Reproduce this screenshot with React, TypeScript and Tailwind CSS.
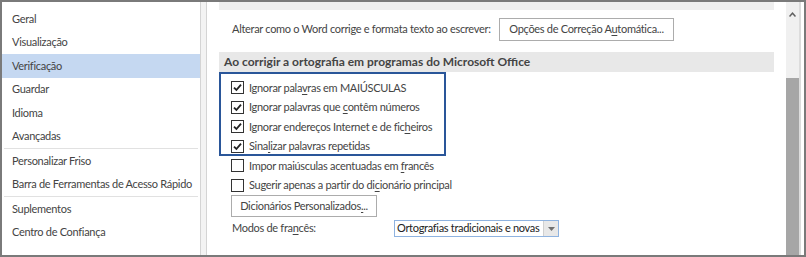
import { ReactNode } from "react";

const FONT = { fontFamily: 'Lato, "Noto Sans", sans-serif' };

const navGroups: string[][] = [
  ["Geral", "Visualização", "Verificação", "Guardar", "Idioma", "Avançadas"],
  ["Personalizar Friso", "Barra de Ferramentas de Acesso Rápido"],
  ["Suplementos", "Centro de Confiança"],
];

function U({ children }: { children: ReactNode }) {
  return <span className="underline underline-offset-2">{children}</span>;
}

function CheckBox({ checked }: { checked: boolean }) {
  return (
    <span className="flex h-[13px] w-[13px] shrink-0 items-center justify-center border border-[#333] bg-white">
      {checked && (
        <svg width="9" height="9" viewBox="0 0 9 9">
          <path d="M1 4.6 L3.4 7 L8 1.6" fill="none" stroke="#222" strokeWidth="1.8" />
        </svg>
      )}
    </span>
  );
}

function CheckRow({ checked, children }: { checked: boolean; children: ReactNode }) {
  return (
    <div className="flex h-[19.5px] items-center gap-[5px] pl-[12px]">
      <CheckBox checked={checked} />
      <span>{children}</span>
    </div>
  );
}

export default function App() {
  return (
    <div
      className="flex h-[257px] w-[806px] border-2 border-[#7a7a7a] bg-white text-[11px] tracking-[-0.3px] text-[#444] whitespace-nowrap"
      style={FONT}
    >
      {/* navegação */}
      <nav className="w-[199px] shrink-0 border-r border-[#d4d4d4] pt-[5px]">
        {navGroups.map((group, gi) => (
          <div key={gi} className={gi > 0 ? "mx-[2px] border-t border-[#e1e1e1]" : ""}>
            {group.map((item) => (
              <div
                key={item}
                className={`flex h-[23.5px] items-center ${
                  item === "Verificação" ? "bg-[#c5d8f1]" : ""
                } ${gi > 0 ? "pl-[8px]" : "pl-[10px]"}`}
              >
                {item}
              </div>
            ))}
          </div>
        ))}
      </nav>

      <div className="w-[5px] shrink-0 bg-[#f3f3f3]" />

      {/* painel direito */}
      <div className="flex flex-1 border-l border-[#d4d4d4]">
        <div className="flex-1">
          <div className="mx-3 h-[8px] bg-[#efefef]" />

          <div className="mt-[8px] flex h-[23px] items-center pl-[25px]">
            <span className="w-[267px] shrink-0">
              Alterar como o Word corrige e formata texto ao escrever:
            </span>
            <button className="flex h-[23px] w-[175px] items-center justify-center border border-[#acacac] bg-white text-[#444]">
              <span>
                Opções de Correção A<U>u</U>tomática...
              </span>
            </button>
          </div>

          <div className="mx-3 mt-[11px] flex h-[20px] items-center bg-[#e8e8e8] pl-[5px] text-[12px] font-bold tracking-normal">
            Ao corrigir a ortografia em programas do Microsoft Office
          </div>

          <div className="ml-3 w-[227px] pt-[6px] shadow-[inset_0_0_0_2px_#2a5699]">
            <CheckRow checked>
              Ignorar pala<U>v</U>ras em MAIÚSCULAS
            </CheckRow>
            <CheckRow checked>
              Ignorar palavras que <U>c</U>ontêm números
            </CheckRow>
            <CheckRow checked>
              Ignorar endereços Internet e de fic<U>h</U>eiros
            </CheckRow>
            <CheckRow checked>
              Sina<U>l</U>izar palavras repetidas
            </CheckRow>
          </div>
          <div className="ml-3">
            <CheckRow checked={false}>
              Impor maiúsculas acentuadas em <U>f</U>rancês
            </CheckRow>
            <CheckRow checked={false}>
              Sugerir apenas a partir do di<U>c</U>ionário principal
            </CheckRow>
          </div>

          <div className="pl-[24px]">
            <button className="flex h-[22px] w-[146px] items-center justify-center border border-[#acacac] bg-white text-[#444]">
              <span>
                Dicionários Personalizados<U>.</U>..
              </span>
            </button>
          </div>

          <div className="mt-[3px] flex h-[17px] items-center pl-[25px]">
            <span className="w-[162px] shrink-0">
              Modos de fra<U>n</U>cês:
            </span>
            <div className="flex h-[17px] w-[165px] items-stretch border border-[#8fb3e0] bg-white">
              <span className="flex flex-1 items-center overflow-hidden pl-[2px] text-[#222]">
                Ortografias tradicionais e novas
              </span>
              <span className="flex w-[15px] shrink-0 items-center justify-center border-l border-[#d0d0d0] bg-[#e8e8e8]">
                <svg width="7" height="4" viewBox="0 0 7 4">
                  <path d="M0 0 H7 L3.5 4 Z" fill="#707070" />
                </svg>
              </span>
            </div>
          </div>
        </div>

        {/* barra de deslocamento */}
        <div className="flex w-[18px] shrink-0">
          <div className="flex w-[13px] flex-col bg-[#f0f0f0]">
            <div className="flex h-[24px] items-center justify-center">
              <svg width="7" height="5" viewBox="0 0 7 5">
                <path d="M0.5 4.5 L3.5 1.2 L6.5 4.5" fill="none" stroke="#606060" strokeWidth="1.5" />
              </svg>
            </div>
            <div className="mt-[52px] flex-1 bg-[#a6a6a6]" />
          </div>
          <div className="w-[2px] bg-[#dcdcdc]" />
          <div className="flex-1 bg-white" />
        </div>
      </div>
    </div>
  );
}
